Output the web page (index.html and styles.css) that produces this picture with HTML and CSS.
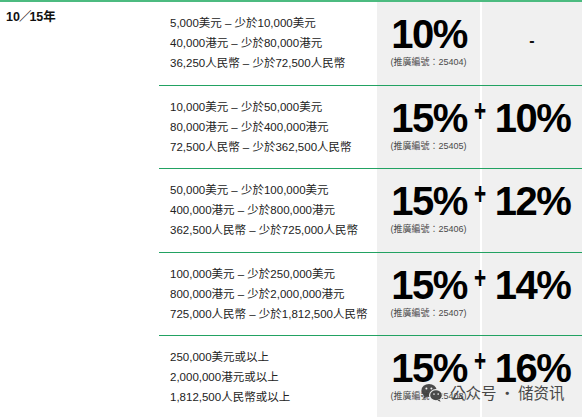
FILE: index.html
```html
<!DOCTYPE html>
<html lang="zh-Hant">
<head>
<meta charset="utf-8">
<title>推廣優惠</title>
<link rel="stylesheet" href="styles.css">
</head>
<body>
<div class="table">
  <div class="term">10<span class="slash">／</span>15年</div>
  <div class="rows">
    <div class="row">
      <div class="amount">
        <p>5,000美元 – 少於10,000美元</p>
        <p>40,000港元 – 少於80,000港元</p>
        <p>36,250人民幣 – 少於72,500人民幣</p>
      </div>
      <div class="pct">
        <div class="big">10%</div>
        <div class="code">(推廣編號：25404)</div>
      </div>
      <div class="pct extra"><div class="dash">-</div></div>
    </div>
    <div class="row">
      <div class="amount">
        <p>10,000美元 – 少於50,000美元</p>
        <p>80,000港元 – 少於400,000港元</p>
        <p>72,500人民幣 – 少於362,500人民幣</p>
      </div>
      <div class="pct">
        <div class="big">15%</div>
        <div class="code">(推廣編號：25405)</div>
      </div>
      <div class="pct extra"><span class="plus">+</span><div class="big">10%</div></div>
    </div>
    <div class="row">
      <div class="amount">
        <p>50,000美元 – 少於100,000美元</p>
        <p>400,000港元 – 少於800,000港元</p>
        <p>362,500人民幣 – 少於725,000人民幣</p>
      </div>
      <div class="pct">
        <div class="big">15%</div>
        <div class="code">(推廣編號：25406)</div>
      </div>
      <div class="pct extra"><span class="plus">+</span><div class="big">12%</div></div>
    </div>
    <div class="row">
      <div class="amount">
        <p>100,000美元 – 少於250,000美元</p>
        <p>800,000港元 – 少於2,000,000港元</p>
        <p>725,000人民幣 – 少於1,812,500人民幣</p>
      </div>
      <div class="pct">
        <div class="big">15%</div>
        <div class="code">(推廣編號：25407)</div>
      </div>
      <div class="pct extra"><span class="plus">+</span><div class="big">14%</div></div>
    </div>
    <div class="row">
      <div class="amount">
        <p>250,000美元或以上</p>
        <p>2,000,000港元或以上</p>
        <p>1,812,500人民幣或以上</p>
      </div>
      <div class="pct">
        <div class="big">15%</div>
        <div class="code">(推廣編號：25408)</div>
      </div>
      <div class="pct extra"><span class="plus">+</span><div class="big">16%</div></div>
    </div>
  </div>
</div>
<div class="watermark">
  <svg class="wx" width="22" height="19" viewBox="0 0 22 19">
    <ellipse cx="8" cy="7.5" rx="7.6" ry="6.6" fill="#3d3d3d"/>
    <path d="M3.5 12.5 L2.6 15.6 L6.6 13.6 Z" fill="#3d3d3d"/>
    <ellipse cx="15" cy="12.3" rx="6.4" ry="5.6" fill="#3d3d3d" stroke="#f0f0f0" stroke-width="1.2"/>
    <path d="M18.6 16.4 L19.6 18.8 L16.4 17.4 Z" fill="#3d3d3d"/>
    <circle cx="5.4" cy="5.6" r="1" fill="#f0f0f0"/>
    <circle cx="10.4" cy="5.6" r="1" fill="#f0f0f0"/>
    <circle cx="13" cy="11" r="0.85" fill="#f0f0f0"/>
    <circle cx="17.2" cy="11" r="0.85" fill="#f0f0f0"/>
  </svg>
  <span class="wm-text">公众号<span class="dot">·</span>储资讯</span>
</div>
</body>
</html>
```
FILE: styles.css
```css
html, body {
  margin: 0;
  padding: 0;
  background: #ffffff;
}

body {
  width: 582px;
  height: 417px;
  overflow: hidden;
  position: relative;
  font-family: "Liberation Sans", "Noto Sans CJK TC", sans-serif;
  color: #1e1e1e;
}

.table {
  display: flex;
  border-top: 2px solid #4cbb80;
}

.term {
  width: 159px;
  flex: none;
  box-sizing: border-box;
  padding: 8px 0 0 6px;
  font-size: 12.5px;
  font-weight: bold;
  color: #111;
  line-height: 15px;
}

.slash {
  font-weight: normal;
  letter-spacing: -2px;
  margin-left: -1px;
}

.rows {
  flex: 1;
  display: flex;
  flex-direction: column;
}

.row {
  display: flex;
  height: 83.5px;
  box-sizing: border-box;
  border-bottom: 1px solid #22a262;
  flex: none;
}

.amount {
  width: 218px;
  flex: none;
  box-sizing: border-box;
  padding-left: 11px;
  display: flex;
  flex-direction: column;
  justify-content: center;
  font-size: 11.5px;
  line-height: 20px;
  color: #222;
}

.amount p {
  margin: 0;
  white-space: nowrap;
}

.pct {
  width: 103px;
  flex: none;
  box-sizing: border-box;
  background: #f0f0f0;
  display: flex;
  flex-direction: column;
  align-items: center;
  padding-top: 11px;
  position: relative;
}

.pct.extra {
  flex: 1;
  width: auto;
  border-left: 2px solid #ffffff;
}

.big {
  font-size: 40px;
  line-height: 42px;
  font-weight: bold;
  letter-spacing: -1.5px;
  color: #000;
  padding-left: 1px;
}

.code {
  margin-top: 2px;
  font-size: 9px;
  line-height: 11px;
  color: #4a4a4a;
  white-space: nowrap;
}

.dash {
  font-size: 16px;
  line-height: 20px;
  font-weight: bold;
  color: #111;
  margin-top: 18px;
}

.plus {
  position: absolute;
  left: -12px;
  top: 8px;
  width: 20px;
  text-align: center;
  font-size: 32px;
  line-height: 32px;
  font-weight: bold;
  color: #000;
  transform: scaleX(0.65);
}

.watermark {
  position: absolute;
  left: 421px;
  top: 382px;
  display: flex;
  align-items: center;
  gap: 7px;
  opacity: 0.92;
}

.wm-text {
  font-family: "Noto Sans CJK SC", sans-serif;
  font-size: 15.5px;
  line-height: 20px;
  color: #3a3a3a;
}

.dot {
  margin: 0 3px;
}
```
